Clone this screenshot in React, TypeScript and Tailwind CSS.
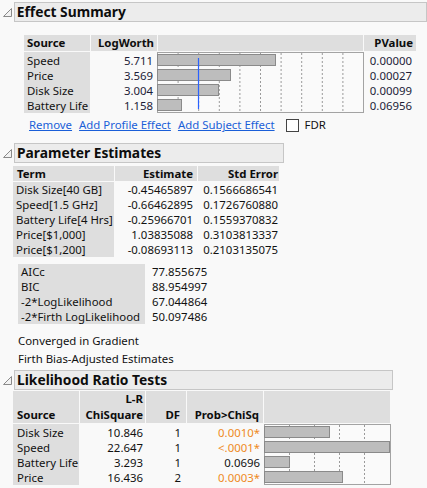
import React from 'react';

const font = { fontFamily: '"Noto Sans", "Open Sans", sans-serif' };

function Disclosure() {
  return (
    <svg width="10" height="10" viewBox="0 0 10 10" className="shrink-0">
      <path d="M8.5 0.5 L8.5 8.5 L0.5 8.5 Z" fill="#f2f2f2" stroke="#8a8a8a" strokeWidth="1" />
    </svg>
  );
}

function OutlineHeader({ title, width }: { title: string; width: string }) {
  return (
    <div className="flex items-center h-[20px]">
      <div className="w-[14px] pl-[3px] pt-[2px] flex items-center">
        <Disclosure />
      </div>
      <div
        className={`${width} h-[20px] border border-[#c6c6c6] bg-[#ececec] flex items-center pl-[2px] text-[13.8px] font-bold text-[#0d0d0d] leading-none`}
      >
        {title}
      </div>
    </div>
  );
}

const effects = [
  { name: 'Speed', lw: '5.711', p: '0.00000', w: 118 },
  { name: 'Price', lw: '3.569', p: '0.00027', w: 73 },
  { name: 'Disk Size', lw: '3.004', p: '0.00099', w: 61 },
  { name: 'Battery Life', lw: '1.158', p: '0.06956', w: 24 },
];

function EffectChart() {
  const grid = [1, 2, 3, 4, 5, 6, 7, 8, 9].map((k) => 0.5 + k * 20.6);
  return (
    <svg width="207" height="61" className="block">
      <rect x="0.5" y="0.5" width="206" height="60" fill="#fafafa" stroke="#a3a3a3" />
      {grid.map((x) => (
        <line key={x} x1={x} y1="1" x2={x} y2="60" stroke="#9a9a9a" strokeDasharray="2 2" />
      ))}
      {effects.map((e, i) => (
        <rect key={e.name} x="0.5" y={2.5 + i * 15} width={e.w} height="11" fill="#bdbdbd" stroke="#8a8a8a" />
      ))}
      <line x1="41.5" y1="6" x2="41.5" y2="57" stroke="#2a62ff" strokeWidth="1.2" />
    </svg>
  );
}

const params = [
  ['Disk Size[40 GB]', '-0.45465897', '0.1566686541'],
  ['Speed[1.5 GHz]', '-0.66462895', '0.1726760880'],
  ['Battery Life[4 Hrs]', '-0.25966701', '0.1559370832'],
  ['Price[$1,000]', '1.03835088', '0.3103813337'],
  ['Price[$1,200]', '-0.08693113', '0.2103135075'],
];

const stats = [
  ['AICc', '77.855675'],
  ['BIC', '88.954997'],
  ['-2*LogLikelihood', '67.044864'],
  ['-2*Firth LogLikelihood', '50.097486'],
];

const lrt = [
  { name: 'Disk Size', chi: '10.846', df: '1', p: '0.0010*', sig: true, w: 65 },
  { name: 'Speed', chi: '22.647', df: '1', p: '<.0001*', sig: true, w: 125 },
  { name: 'Battery Life', chi: '3.293', df: '1', p: '0.0696', sig: false, w: 25 },
  { name: 'Price', chi: '16.436', df: '2', p: '0.0003*', sig: true, w: 78 },
];

function LrtChart() {
  return (
    <svg width="127" height="61" className="block">
      <rect x="0.5" y="0.5" width="126" height="60" fill="#fafafa" stroke="#a3a3a3" />
      {[25, 50, 75, 100].map((x) => (
        <line key={x} x1={x + 0.5} y1="1" x2={x + 0.5} y2="60" stroke="#9a9a9a" strokeDasharray="2 2" />
      ))}
      {lrt.map((r, i) => (
        <rect key={r.name} x="0.5" y={2.5 + i * 15} width={r.w} height="11" fill="#bdbdbd" stroke="#8a8a8a" />
      ))}
    </svg>
  );
}

export default function App() {
  return (
    <div style={font} className="w-[427px] h-[488px] overflow-hidden bg-[#f9f9f9] text-[11.4px] text-[#111]">
      {/* Effect Summary */}
      <div className="pt-[2px]">
        <OutlineHeader title="Effect Summary" width="w-[420px]" />
      </div>

      <div className="ml-[24px] mt-[13px]">
        <div className="flex gap-px h-[16px] font-bold text-[#0d0d0d]">
          <div className="w-[66px] bg-[#dedede] pl-[3px] leading-[16px]">Source</div>
          <div className="w-[66px] bg-[#dedede] pr-[3px] text-right leading-[16px]">LogWorth</div>
          <div className="w-[205px] bg-[#dedede]" />
          <div className="w-[52px] bg-[#dedede] pr-[3px] text-right leading-[16px]">PValue</div>
        </div>
        <div className="flex mt-px">
          <div className="w-[66px] bg-[#dedede] pt-px">
            {effects.map((e) => (
              <div key={e.name} className="h-[15px] leading-[15px] pl-[3px]">{e.name}</div>
            ))}
          </div>
          <div className="w-[66px] ml-px pt-px">
            {effects.map((e) => (
              <div key={e.name} className="h-[15px] leading-[15px] pr-[4px] text-right text-[#1c1c38]">{e.lw}</div>
            ))}
          </div>
          <EffectChart />
          <div className="w-[52px] pt-px">
            {effects.map((e) => (
              <div key={e.name} className="h-[15px] leading-[15px] pr-[4px] text-right text-[#1c1c38]">{e.p}</div>
            ))}
          </div>
        </div>
      </div>

      <div className="flex items-center h-[18px] mt-[3px] ml-[29px] gap-[7px]">
        <span className="text-[#1a5fd8] underline">Remove</span>
        <span className="text-[#1a5fd8] underline">Add Profile Effect</span>
        <span className="text-[#1a5fd8] underline">Add Subject Effect</span>
        <span className="ml-[4px] w-[13px] h-[13px] border border-[#444] bg-white" />
        <span className="-ml-px">FDR</span>
      </div>

      {/* Parameter Estimates */}
      <div className="mt-[9px]">
        <OutlineHeader title="Parameter Estimates" width="w-[270px]" />
      </div>

      <div className="ml-[13px] mt-[3px]">
        <div className="flex gap-px h-[15px] font-bold text-[#0d0d0d]">
          <div className="w-[101px] bg-[#dedede] pl-[4px] leading-[15px]">Term</div>
          <div className="w-[82px] bg-[#dedede] pr-[4px] text-right leading-[15px]">Estimate</div>
          <div className="w-[81px] bg-[#dedede] pr-[1px] text-right leading-[15px]">Std Error</div>
        </div>
        <div className="flex gap-px mt-px">
          <div className="w-[101px] bg-[#dedede]">
            {params.map((r) => (
              <div key={r[0] + r[1]} className="h-[15px] leading-[15px] pl-[3px]">{r[0]}</div>
            ))}
          </div>
          <div className="w-[82px]">
            {params.map((r) => (
              <div key={r[1]} className="h-[15px] leading-[15px] pr-[4px] text-right">{r[1]}</div>
            ))}
          </div>
          <div className="w-[81px]">
            {params.map((r) => (
              <div key={r[2]} className="h-[15px] leading-[15px] pr-[1px] text-right">{r[2]}</div>
            ))}
          </div>
        </div>
      </div>

      <div className="ml-[18px] mt-[7px] flex">
        <div className="w-[127px] bg-[#dedede]">
          {stats.map((s) => (
            <div key={s[0]} className="h-[15px] leading-[15px] pl-[3px]">{s[0]}</div>
          ))}
        </div>
        <div className="pl-[7px]">
          {stats.map((s) => (
            <div key={s[0]} className="h-[15px] leading-[15px]">{s[1]}</div>
          ))}
        </div>
      </div>

      <div className="ml-[18px] mt-[8px] leading-[18px]">
        <div>Converged in Gradient</div>
        <div>Firth Bias-Adjusted Estimates</div>
      </div>

      {/* Likelihood Ratio Tests */}
      <div className="mt-[2px]">
        <OutlineHeader title="Likelihood Ratio Tests" width="w-[379px]" />
      </div>

      <div className="ml-[13px] mt-px">
        <div className="flex gap-px h-[32px] font-bold text-[#0d0d0d] leading-[16px]">
          <div className="w-[66px] bg-[#dedede] pl-[4px] flex items-end">Source</div>
          <div className="w-[65px] bg-[#dedede] pr-[2px] text-right flex flex-col justify-end">
            <div>L-R</div>
            <div>ChiSquare</div>
          </div>
          <div className="w-[40px] bg-[#dedede] pr-[6px] flex items-end justify-end">DF</div>
          <div className="w-[76px] bg-[#dedede] pr-[4px] flex items-end justify-end">Prob&gt;ChiSq</div>
          <div className="w-[126px] bg-[#dedede]" />
        </div>
        <div className="flex mt-px">
          <div className="w-[66px] bg-[#dedede] pt-px">
            {lrt.map((r) => (
              <div key={r.name} className="h-[15px] leading-[15px] pl-[4px]">{r.name}</div>
            ))}
          </div>
          <div className="w-[65px] ml-px pt-px">
            {lrt.map((r) => (
              <div key={r.name} className="h-[15px] leading-[15px] pr-[2px] text-right">{r.chi}</div>
            ))}
          </div>
          <div className="w-[41px] ml-px pt-px">
            {lrt.map((r) => (
              <div key={r.name} className="h-[15px] leading-[15px] pr-[6px] text-right">{r.df}</div>
            ))}
          </div>
          <div className="w-[77px] pt-px">
            {lrt.map((r) => (
              <div
                key={r.name}
                className={`h-[15px] leading-[15px] pr-[4px] text-right ${r.sig ? 'text-[#ef8a1d]' : ''}`}
              >
                {r.p}
              </div>
            ))}
          </div>
          <LrtChart />
        </div>
      </div>
    </div>
  );
}
